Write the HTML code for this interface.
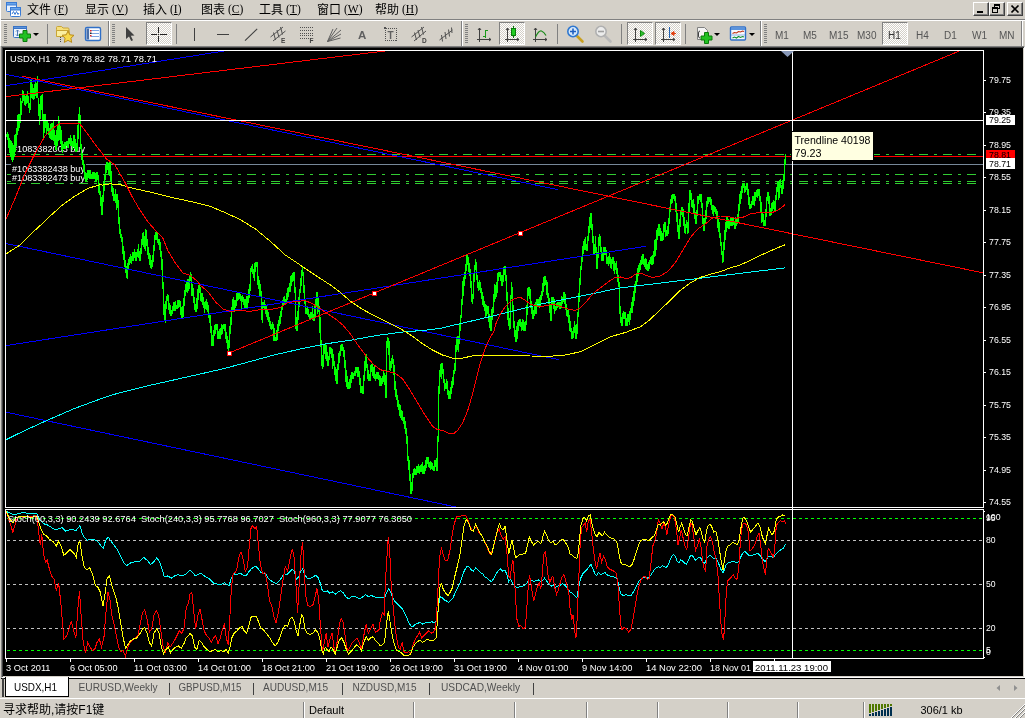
<!DOCTYPE html>
<html lang="zh">
<head>
<meta charset="utf-8">
<title>USDX,H1</title>
<style>
html,body{margin:0;padding:0;}
body{width:1025px;height:718px;overflow:hidden;background:#d4d0c8;position:relative;
 font-family:"Liberation Sans","Noto Sans CJK SC",sans-serif;font-size:11px;color:#000;}
.abs{position:absolute;}
.mi,.tf,.st,svg{will-change:transform;}
#menubar{position:absolute;left:0;top:0;width:1025px;height:19px;background:#d4d0c8;}
.mi{position:absolute;top:2px;height:17px;line-height:17px;font-size:12px;white-space:nowrap;
 font-family:"Liberation Sans","Noto Sans CJK SC",sans-serif;color:#000;font-weight:400;}
.mi u{text-decoration:underline;}
.mi .k{font-family:"Liberation Serif","Noto Serif CJK SC",serif;font-size:11.5px;margin-left:3px;font-weight:400;position:relative;top:-1px;}
#tb{position:absolute;left:0;top:21px;width:1025px;height:25px;background:#d4d0c8;}
.grip{position:absolute;top:24px;width:3px;height:20px;
 background:repeating-linear-gradient(to bottom,#808080 0,#808080 1px,#d4d0c8 1px,#d4d0c8 2px);}
.sep{position:absolute;top:24px;width:1px;height:20px;background:#808080;}
.sep2{position:absolute;top:21px;width:1px;height:25px;background:#808080;border-right:1px solid #fff;}
.pressed{position:absolute;top:22px;height:23px;box-sizing:border-box;border:1px solid;border-color:#808080 #fff #fff #808080;
 background-color:#fff;background-image:linear-gradient(45deg,#d4d0c8 25%,transparent 25%,transparent 75%,#d4d0c8 75%),linear-gradient(45deg,#d4d0c8 25%,transparent 25%,transparent 75%,#d4d0c8 75%);
 background-size:2px 2px;background-position:0 0,1px 1px;}
.tf{position:absolute;top:30px;height:12px;line-height:12px;font-size:10px;color:#555;white-space:nowrap;}
.ico{position:absolute;overflow:visible;}
.wbtn{position:absolute;top:2px;width:16px;height:14px;box-sizing:border-box;background:#d4d0c8;
 border:1px solid;border-color:#fff #404040 #404040 #fff;box-shadow:inset -1px -1px 0 #808080;}
#chartwrap{position:absolute;left:1px;top:46px;width:1024px;height:632px;background:#000;
 box-sizing:border-box;border:1px solid;border-color:#808080 #fff #fff #808080;box-shadow:inset 1px 1px 0 #404040,inset -1px -1px 0 #d4d0c8;}
#chartsvg{position:absolute;left:0;top:0;}
#tabs{position:absolute;left:0;top:677px;width:1025px;height:21px;background:#d4d0c8;}
.tab{position:absolute;top:683px;height:13px;line-height:13px;font-size:11px;color:#444;white-space:nowrap;}
.tabsep{position:absolute;top:683px;width:1px;height:12px;background:#404040;}
#status{position:absolute;left:0;top:698px;width:1025px;height:20px;background:#d4d0c8;}
.st{position:absolute;top:703px;height:14px;line-height:14px;font-size:12px;white-space:nowrap;color:#000;font-weight:400;}
.stsep{position:absolute;top:702px;width:1px;height:16px;background:#808080;border-right:1px solid #fff;}
svg text{font-family:"Liberation Sans","Noto Sans CJK SC",sans-serif;}
</style>
</head>
<body>
<div id="menubar"></div>
<div class="abs" style="left:0;top:19px;width:1025px;height:1px;background:#808080"></div>
<div class="abs" style="left:0;top:20px;width:1025px;height:1px;background:#fff"></div>
<div class="abs" style="left:0;top:0;width:1px;height:46px;background:#fff"></div>
<!-- app icon -->
<svg class="ico" style="left:5px;top:1px" width="17" height="17" viewBox="0 0 17 17">
 <rect x="1.5" y="1.5" width="10" height="9" rx="1" fill="#e8f2ff" stroke="#3a7bd5"/>
 <rect x="1.5" y="1.5" width="10" height="2.5" fill="#6aa5ea" stroke="#3a7bd5"/>
 <rect x="5.5" y="6.5" width="10" height="9" rx="1" fill="#ffffff" stroke="#3a7bd5"/>
 <rect x="5.5" y="6.5" width="10" height="2.5" fill="#6aa5ea" stroke="#3a7bd5"/>
 <path d="M7 13 L8.5 10.5 L10 13.5 L11.5 10.5 L13 13.5 L14 12" fill="none" stroke="#3a7bd5" stroke-width="1"/>
</svg>
<div class="mi" style="left:27px">文件<span class="k">(<u>F</u>)</span></div>
<div class="mi" style="left:85px">显示<span class="k">(<u>V</u>)</span></div>
<div class="mi" style="left:143px">插入<span class="k">(<u>I</u>)</span></div>
<div class="mi" style="left:201px">图表<span class="k">(<u>C</u>)</span></div>
<div class="mi" style="left:259px">工具<span class="k">(<u>T</u>)</span></div>
<div class="mi" style="left:317px">窗口<span class="k">(<u>W</u>)</span></div>
<div class="mi" style="left:375px">帮助<span class="k">(<u>H</u>)</span></div>
<!-- window buttons -->
<div class="wbtn" style="left:973px"><div class="abs" style="left:3px;top:8px;width:6px;height:2px;background:#000"></div></div>
<div class="wbtn" style="left:989px">
 <div class="abs" style="left:4px;top:1px;width:6px;height:5px;box-sizing:border-box;border:1px solid #000;border-top-width:2px"></div>
 <div class="abs" style="left:2px;top:4px;width:6px;height:6px;box-sizing:border-box;border:1px solid #000;border-top-width:2px;background:#d4d0c8"></div>
</div>
<div class="wbtn" style="left:1007px">
 <svg class="abs" style="left:3px;top:2px" width="9" height="8" viewBox="0 0 9 8"><path d="M0.5 0.5 L7.5 7.5 M7.5 0.5 L0.5 7.5" stroke="#000" stroke-width="1.6" fill="none"/></svg>
</div>
<!-- toolbar -->
<div class="grip" style="left:4px"></div>
<div class="sep" style="left:47px"></div>
<div class="sep2" style="left:108px"></div>
<div class="grip" style="left:112px"></div>
<div class="pressed" style="left:146px;width:26px"></div>
<div class="sep" style="left:176px"></div>
<div class="sep2" style="left:461px"></div>
<div class="grip" style="left:465px"></div>
<div class="pressed" style="left:499px;width:26px"></div>
<div class="sep" style="left:557px"></div>
<div class="sep" style="left:621px"></div>
<div class="pressed" style="left:627px;width:26px"></div>
<div class="pressed" style="left:655px;width:26px"></div>
<div class="sep" style="left:685px"></div>
<div class="sep2" style="left:760px"></div>
<div class="grip" style="left:764px"></div>
<div class="pressed" style="left:882px;width:26px"></div>
<div class="sep2" style="left:1021px"></div>
<div class="tf" style="left:775px">M1</div>
<div class="tf" style="left:803px">M5</div>
<div class="tf" style="left:829px">M15</div>
<div class="tf" style="left:857px">M30</div>
<div class="tf" style="left:888px;color:#333">H1</div>
<div class="tf" style="left:916px">H4</div>
<div class="tf" style="left:944px">D1</div>
<div class="tf" style="left:972px">W1</div>
<div class="tf" style="left:999px">MN</div>
<svg class="ico" style="left:0;top:21px" width="1025" height="25" viewBox="0 21 1025 25">
 <!-- new chart -->
 <g>
  <rect x="13.5" y="26.5" width="13" height="11" rx="1" fill="#eef4fc" stroke="#3a74c4"/>
  <rect x="13.5" y="26.5" width="13" height="2" fill="#5b93dc" stroke="#3a74c4"/>
  <path d="M17.5 30 V36 M16 31.5 L17.5 30 L19 31.5 M16 34.5 L17.5 36 L19 34.5" stroke="#4b78b8" fill="none" stroke-width="1"/>
  <path d="M23 30.5 h4 v3.5 h3.5 v4 h-3.5 v3.5 h-4 v-3.5 h-3.5 v-4 h3.5 z" fill="#22c022" stroke="#0a7a0a" stroke-width="1"/>
  <path d="M33 33 h6 l-3 3 z" fill="#000"/>
 </g>
 <!-- folder star -->
 <g>
  <path d="M56.5 29.5 v-2 q0 -1 1 -1 h4 l1.5 1.5 h5 q1 0 1 1 v7 h-12.5 z" fill="#f6df7c" stroke="#c9a535"/>
  <path d="M56.5 30.5 h12.5 v6 h-12.5 z" fill="#fbeea0" stroke="#c9a535"/>
  <path d="M60.5 37 v5" stroke="#444" stroke-dasharray="1 1"/>
  <path d="M68 31 l1.8 3.8 l4.2 .5 l-3.1 2.9 l.8 4.2 l-3.7 -2.1 l-3.7 2.1 l.8 -4.2 l-3.1 -2.9 l4.2 -.5 z" fill="#f7d84a" stroke="#b98a1a" stroke-width="1"/>
 </g>
 <!-- list -->
 <g>
  <rect x="85.5" y="27.5" width="15" height="13" rx="1.5" fill="#fdfdff" stroke="#2f6fc7" stroke-width="1.4"/>
  <rect x="86.5" y="28.5" width="2.6" height="11" fill="#4a6fa8"/>
  <path d="M91 30.5 h8 M91 33.5 h8 M91 36.5 h8" stroke="#7aa4e0" stroke-width="1"/>
  <rect x="90" y="30" width="1.5" height="1.5" fill="#e02020"/><rect x="90" y="32.5" width="1.5" height="1.5" fill="#222"/><rect x="90" y="35" width="1.5" height="1.5" fill="#e02020"/>
 </g>
 <!-- cursor arrow -->
 <path d="M126 27 L126 39 L129 36.5 L131.2 41 L133 40.2 L130.8 35.8 L134.5 35.5 Z" fill="#404040"/>
 <!-- crosshair -->
 <path d="M150.5 34.5 H157 M160 34.5 H166.5 M158.5 27 V33 M158.5 36 V42" stroke="#222" stroke-width="1" shape-rendering="crispEdges" fill="none"/>
 <rect x="158" y="34" width="1" height="1" fill="#222"/>
 <!-- v line, h line, diag -->
 <path d="M194.5 28 V41 M217 34.5 H229" stroke="#404040" stroke-width="1" shape-rendering="crispEdges"/>
 <path d="M245 40.7 L257.2 28.8" stroke="#404040" stroke-width="1.1"/>
 <!-- E channel -->
 <g stroke="#505050" stroke-width="1" fill="none">
  <path d="M270.5 37 L283 27 M273 41 L285.5 31"/>
  <path d="M273.5 32.5 L275.5 40 M277 30 L279 37.5 M280.5 27 L282.5 34.5" />
 </g>
 <text x="281" y="43" font-size="6.5" font-weight="bold" fill="#404040">E</text>
 <!-- F fibo -->
 <g stroke="#505050" stroke-width="1" stroke-dasharray="1 1" shape-rendering="crispEdges">
  <path d="M300 27.5 H313 M300 30.5 H313 M300 33.5 H313 M300 35.5 H313 M300 38.5 H309"/>
 </g>
 <text x="309.5" y="43" font-size="6.5" font-weight="bold" fill="#404040">F</text>
 <!-- fan -->
 <g stroke="#606060" stroke-width="1" fill="none">
  <path d="M327.5 41.5 L337 28 M327.5 41.5 L341 30 M327.5 41.5 L341 34 M327.5 41.5 L340.5 38 M327.5 41.5 L333 29"/>
 </g>
 <text x="358" y="39" font-size="11.5" font-weight="bold" fill="#606060">A</text>
 <!-- T box -->
 <rect x="385.5" y="28.5" width="11" height="12" fill="none" stroke="#505050" stroke-dasharray="1 1" shape-rendering="crispEdges"/>
 <rect x="384" y="27" width="2" height="2" fill="#505050"/>
 <text x="387.5" y="38.5" font-size="10" font-weight="bold" fill="#606060">T</text>
 <!-- D -->
 <g stroke="#505050" stroke-width="1" fill="none">
  <path d="M411.5 37 L424 27 M414 41 L426 31"/>
  <path d="M414.5 32.5 L416.5 40 M418 30 L420 37.5 M421.5 27 L423.5 34.5" />
 </g>
 <text x="422" y="43" font-size="6.5" font-weight="bold" fill="#404040">D</text>
 <!-- arrows icon -->
 <g stroke="#505050" stroke-width="1" fill="none">
  <path d="M439.5 40 L452.5 30"/>
  <path d="M441.5 35 L442.5 41.5 M445 32 L446 39 M448.5 29.5 L449.5 36.5 M451.5 27.5 L452 33"/>
 </g>
 <!-- bar chart icon -->
 <g stroke="#404040" stroke-width="1" fill="none" shape-rendering="crispEdges">
  <path d="M479.5 28 V42 M477 39.5 H491"/>
 </g>
 <path d="M478 30 L479.5 28 L481 30 M489 38 L491 39.5 L489 41" stroke="#404040" fill="none"/>
 <path d="M485.5 30 V37.5 M485.5 30.5 H488 M483 36.5 H485.5" stroke="#1a9a1a" stroke-width="1.4" fill="none" shape-rendering="crispEdges"/>
 <!-- candle icon -->
 <g stroke="#404040" stroke-width="1" fill="none" shape-rendering="crispEdges">
  <path d="M507.5 28 V42 M505 39.5 H519"/>
 </g>
 <path d="M506 30 L507.5 28 L509 30 M517 38 L519 39.5 L517 41" stroke="#404040" fill="none"/>
 <path d="M513.5 26 V38" stroke="#0a7a0a" shape-rendering="crispEdges"/>
 <rect x="511.5" y="28.5" width="4" height="7" fill="#22cc22" stroke="#0a7a0a"/>
 <!-- line chart icon -->
 <g stroke="#404040" stroke-width="1" fill="none" shape-rendering="crispEdges">
  <path d="M535.5 28 V42 M533 39.5 H547"/>
 </g>
 <path d="M534 30 L535.5 28 L537 30 M545 38 L547 39.5 L545 41" stroke="#404040" fill="none"/>
 <path d="M535.5 37 Q539 30 541.5 31 Q544 32 546 35.5" stroke="#1a8a1a" fill="none" stroke-width="1.2"/>
 <!-- zoom in -->
 <path d="M577 36 L582.5 41.5" stroke="#c9a020" stroke-width="2.6" stroke-linecap="round"/>
 <circle cx="573" cy="31.5" r="5.2" fill="#d6e8fb" stroke="#2f78d0" stroke-width="1.6"/>
 <path d="M570 31.5 H576 M573 28.5 V34.5" stroke="#1f5fc0" stroke-width="1.6"/>
 <!-- zoom out -->
 <path d="M605 36 L610.5 41.5" stroke="#b8b8b8" stroke-width="2.6" stroke-linecap="round"/>
 <circle cx="601" cy="31.5" r="5.2" fill="#ececec" stroke="#b0b0b0" stroke-width="1.6"/>
 <path d="M598 31.5 H604" stroke="#a0a0a0" stroke-width="1.6"/>
 <!-- shift icon -->
 <g stroke="#404040" stroke-width="1" fill="none" shape-rendering="crispEdges">
  <path d="M635.5 28 V42 M633 39.5 H647"/>
 </g>
 <path d="M634 30 L635.5 28 L637 30 M645 38 L647 39.5 L645 41" stroke="#404040" fill="none"/>
 <path d="M640.5 30.5 L644.5 33.5 L640.5 36.5 Z" fill="#30c030" stroke="#0a8a0a"/>
 <!-- autoscroll icon -->
 <g stroke="#404040" stroke-width="1" fill="none" shape-rendering="crispEdges">
  <path d="M663.5 28 V42 M661 39.5 H675"/>
 </g>
 <path d="M662 30 L663.5 28 L665 30 M673 38 L675 39.5 L673 41" stroke="#404040" fill="none"/>
 <path d="M669.5 27 V38" stroke="#2060b0" stroke-width="1" shape-rendering="crispEdges"/>
 <path d="M671 33.5 L674 31.5 V35.5 Z M671 33.5 H676" fill="#e04010" stroke="#e04010" stroke-width="1"/>
 <!-- indicators -->
 <path d="M697.5 27.5 h7 l3 3 v9 h-10 z" fill="#f4f4f4" stroke="#808080"/>
 <path d="M700 31 q-1.5 0 -1.5 2 v3 q0 2 1.5 2" fill="none" stroke="#404040"/>
 <path d="M704.500 32.5 h4 v3.500 h3.500 v4 h-3.500 v3.500 h-4 v-3.500 h-3.500 v-4 h3.500 z" fill="#22c022" stroke="#0a7a0a" stroke-width="1"/>
 <path d="M714 33 h6 l-3 3 z" fill="#000"/>
 <!-- template -->
 <rect x="730.5" y="27" width="15" height="13" rx="1" fill="#f6f9ff" stroke="#2f6fc7" stroke-width="1.4"/>
 <rect x="731" y="27.5" width="14" height="2.5" fill="#5b93dc"/>
 <path d="M732.5 33.5 l2 -1 l2 .5 l2 -1.500 l2 .5 l2 -1 l1.5 .5" stroke="#c03010" fill="none" stroke-width="1.1"/>
 <path d="M732.5 38 l2 -1 l2 1 l2 -1.500 l2 1 l2 -1 l1.5 .5" stroke="#109030" fill="none" stroke-width="1.1"/>
 <path d="M731 35 h14" stroke="#7aa4e0" stroke-width=".8"/>
 <path d="M749 33 h6 l-3 3 z" fill="#000"/>
</svg>
<div id="chartwrap"></div>
<svg id="chartsvg" width="1025" height="632" viewBox="0 46 1025 632" style="top:46px">
<g shape-rendering="crispEdges" fill="none" stroke="#fff" stroke-width="1">
<rect x="5.5" y="50.5" width="978" height="457"/>
<rect x="5.5" y="509.5" width="978" height="149"/>
</g>
<defs><clipPath id="cm"><rect x="6" y="51" width="977" height="456"/></clipPath><clipPath id="cs"><rect x="6" y="510" width="977" height="148"/></clipPath></defs>
<g clip-path="url(#cm)" shape-rendering="crispEdges" fill="none" stroke-width="1">
<path d="M7 154.5 H977" stroke="#32cd32" stroke-dasharray="9 6 3 6"/>
<path d="M7 174.5 H977" stroke="#32cd32" stroke-dasharray="9 6 3 6"/>
<path d="M7 181.5 H977" stroke="#32cd32" stroke-dasharray="9 6 3 6"/>
<path d="M7 183.5 H977" stroke="#32cd32" stroke-dasharray="9 6 3 6"/>
<path d="M6 156.5 H983" stroke="#ff0000"/>
<path d="M6 164.5 H983" stroke="#778899"/>
<rect x="11" y="163" width="75" height="19" fill="#000" stroke="none"/>
</g>
<g font-size="9.5" fill="#fff">
<text x="12" y="152" textLength="73" lengthAdjust="spacingAndGlyphs">#1083382003 buy</text>
<text x="12" y="172" textLength="73" lengthAdjust="spacingAndGlyphs">#1083382438 buy</text>
<text x="12" y="181" textLength="73" lengthAdjust="spacingAndGlyphs">#1083382473 buy</text>
</g>
<g clip-path="url(#cm)" shape-rendering="crispEdges" fill="none" stroke-width="1">
<path d="M6.5 134V137M7.5 132V140M8.5 134V148M9.5 138V153M10.5 140V157M11.5 141V160M12.5 143V162M13.5 145V160M14.5 135V157M15.5 134V152M16.5 128V146M17.5 115V135M18.5 114V131M19.5 114V128M20.5 98V123M21.5 101V115M22.5 90V103M23.5 91V101M24.5 95V105M25.5 96V106M26.5 95V104M27.5 91V103M28.5 96V108M29.5 103V113M30.5 79V110M31.5 80V98M32.5 84V99M33.5 88V100M34.5 84V99M35.5 81V96M36.5 83V98M37.5 76V98M38.5 98V116M39.5 104V125M40.5 96V119M41.5 95V110M42.5 94V120M43.5 114V138M44.5 114V133M45.5 114V128M46.5 121V135M47.5 121V131M48.5 123V135M49.5 128V138M50.5 124V139M51.5 123V140M52.5 123V140M53.5 121V141M54.5 130V145M55.5 135V150M56.5 130V150M57.5 126V146M58.5 116V141M59.5 121V140M60.5 126V144M61.5 130V150M62.5 141V153M63.5 144V149M64.5 142V149M65.5 142V149M66.5 141V146M67.5 141V148M68.5 138V148M69.5 138V144M70.5 135V146M71.5 138V146M72.5 141V150M73.5 135V147M74.5 135V149M75.5 139V152M76.5 143V152M77.5 125V151M78.5 114V139M79.5 107V123M80.5 115V149M81.5 144V160M82.5 153V165M83.5 160V172M84.5 164V179M85.5 172V182M86.5 173V182M87.5 170V180M88.5 170V178M89.5 170V179M90.5 170V179M91.5 174V179M92.5 172V179M93.5 172V179M94.5 172V179M95.5 173V182M96.5 172V182M97.5 172V180M98.5 175V193M99.5 183V195M100.5 191V206M101.5 197V215M102.5 195V215M103.5 182V202M104.5 175V191M105.5 165V180M106.5 162V173M107.5 162V170M108.5 163V174M109.5 162V176M110.5 162V181M111.5 171V192M112.5 186V196M113.5 188V201M114.5 194V201M115.5 189V203M116.5 194V210M117.5 194V208M118.5 200V224M119.5 217V234M120.5 229V238M121.5 234V242M122.5 237V254M123.5 246V260M124.5 251V267M125.5 260V273M126.5 266V278M127.5 263V279M128.5 259V270M129.5 257V265M130.5 254V263M131.5 256V264M132.5 252V261M133.5 252V261M134.5 249V258M135.5 252V261M136.5 252V261M137.5 249V257M138.5 244V258M139.5 251V261M140.5 248V261M141.5 239V254M142.5 233V245M143.5 232V247M144.5 236V249M145.5 229V251M146.5 230V246M147.5 239V255M148.5 247V259M149.5 253V265M150.5 255V268M151.5 260V269M152.5 255V267M153.5 245V262M154.5 235V251M155.5 232V240M156.5 232V240M157.5 233V243M158.5 239V245M159.5 239V250M160.5 242V257M161.5 251V270M162.5 259V289M163.5 282V315M164.5 304V321M165.5 301V323M166.5 296V309M167.5 294V301M168.5 295V310M169.5 303V314M170.5 305V316M171.5 310V316M172.5 306V314M173.5 302V311M174.5 302V311M175.5 301V311M176.5 305V309M177.5 300V309M178.5 300V308M179.5 300V307M180.5 301V315M181.5 307V319M182.5 306V319M183.5 298V317M184.5 290V306M185.5 284V296M186.5 281V292M187.5 279V293M188.5 279V291M189.5 275V289M190.5 272V281M191.5 274V296M192.5 284V296M193.5 288V303M194.5 297V310M195.5 304V312M196.5 298V312M197.5 289V309M198.5 285V300M199.5 285V293M200.5 287V301M201.5 293V302M202.5 293V305M203.5 297V308M204.5 302V313M205.5 301V309M206.5 299V310M207.5 302V312M208.5 305V318M209.5 314V323M210.5 315V333M211.5 326V346M212.5 335V346M213.5 330V346M214.5 325V336M215.5 324V334M216.5 324V330M217.5 324V339M218.5 331V339M219.5 329V339M220.5 328V339M221.5 324V335M222.5 325V334M223.5 324V329M224.5 324V331M225.5 324V339M226.5 332V343M227.5 336V349M228.5 340V351M229.5 326V348M230.5 317V334M231.5 307V325M232.5 299V312M233.5 297V311M234.5 300V312M235.5 300V308M236.5 293V306M237.5 292V301M238.5 292V300M239.5 292V299M240.5 294V301M241.5 296V309M242.5 295V302M243.5 297V305M244.5 299V309M245.5 299V309M246.5 296V309M247.5 296V308M248.5 289V303M249.5 284V298M250.5 268V291M251.5 266V272M252.5 264V274M253.5 269V278M254.5 263V281M255.5 262V272M256.5 262V267M257.5 262V285M258.5 276V289M259.5 280V296M260.5 284V297M261.5 291V320M262.5 302V323M263.5 302V308M264.5 300V310M265.5 304V314M266.5 305V317M267.5 310V320M268.5 312V322M269.5 317V326M270.5 321V329M271.5 324V330M272.5 322V329M273.5 324V341M274.5 328V341M275.5 337V341M276.5 330V341M277.5 324V340M278.5 320V331M279.5 316V326M280.5 311V324M281.5 306V317M282.5 300V310M283.5 297V305M284.5 296V305M285.5 299V304M286.5 293V304M287.5 288V300M288.5 287V297M289.5 283V292M290.5 276V292M291.5 275V286M292.5 273V282M293.5 272V281M294.5 272V293M295.5 287V329M296.5 317V331M297.5 311V331M298.5 297V320M299.5 289V307M300.5 278V293M301.5 270V286M302.5 267V276M303.5 272V293M304.5 285V304M305.5 299V314M306.5 308V314M307.5 307V315M308.5 309V317M309.5 314V319M310.5 312V320M311.5 312V318M312.5 306V320M313.5 314V321M314.5 306V321M315.5 299V317M316.5 292V306M317.5 292V314M318.5 297V312M319.5 306V333M320.5 317V347M321.5 340V366M322.5 355V369M323.5 344V367M324.5 344V354M325.5 344V359M326.5 345V361M327.5 352V366M328.5 356V366M329.5 347V360M330.5 347V354M331.5 348V358M332.5 349V369M333.5 354V366M334.5 361V375M335.5 367V381M336.5 369V384M337.5 364V384M338.5 353V370M339.5 351V363M340.5 345V356M341.5 344V351M342.5 344V351M343.5 347V357M344.5 350V368M345.5 360V382M346.5 370V387M347.5 376V389M348.5 382V389M349.5 379V389M350.5 375V388M351.5 372V383M352.5 372V379M353.5 373V379M354.5 371V376M355.5 367V376M356.5 367V373M357.5 367V377M358.5 367V377M359.5 371V385M360.5 378V393M361.5 386V393M362.5 386V394M363.5 375V394M364.5 361V381M365.5 354V371M366.5 354V368M367.5 364V379M368.5 370V381M369.5 374V381M370.5 365V381M371.5 364V372M372.5 364V376M373.5 367V378M374.5 366V379M375.5 374V381M376.5 372V379M377.5 372V379M378.5 372V380M379.5 375V386M380.5 376V386M381.5 378V386M382.5 376V384M383.5 371V382M384.5 373V385M385.5 375V398M386.5 341V398M387.5 337V348M388.5 338V355M389.5 341V370M390.5 361V371M391.5 358V368M392.5 355V364M393.5 359V375M394.5 365V390M395.5 381V397M396.5 389V400M397.5 395V407M398.5 400V410M399.5 404V416M400.5 405V418M401.5 410V420M402.5 411V421M403.5 417V424M404.5 417V429M405.5 421V434M406.5 428V444M407.5 436V461M408.5 456V470M409.5 460V481M410.5 474V494M411.5 482V494M412.5 473V491M413.5 469V478M414.5 468V475M415.5 469V475M416.5 466V475M417.5 466V473M418.5 464V473M419.5 466V474M420.5 465V472M421.5 464V472M422.5 462V474M423.5 466V474M424.5 465V474M425.5 460V471M426.5 457V468M427.5 457V464M428.5 457V467M429.5 462V468M430.5 461V470M431.5 462V469M432.5 463V470M433.5 466V471M434.5 460V471M435.5 460V467M436.5 458V471M437.5 436V471M438.5 386V442M439.5 370V394M440.5 364V377M441.5 363V379M442.5 363V374M443.5 369V383M444.5 379V391M445.5 383V389M446.5 379V389M447.5 381V395M448.5 390V399M449.5 391V399M450.5 387V399M451.5 381V394M452.5 377V388M453.5 370V385M454.5 363V374M455.5 345V371M456.5 337V352M457.5 336V350M458.5 336V352M459.5 323V344M460.5 315V331M461.5 299V318M462.5 281V305M463.5 277V296M464.5 272V286M465.5 264V279M466.5 254V271M467.5 254V265M468.5 257V272M469.5 263V276M470.5 269V288M471.5 281V302M472.5 294V304M473.5 274V299M474.5 265V282M475.5 259V270M476.5 262V280M477.5 275V288M478.5 282V291M479.5 280V290M480.5 282V293M481.5 288V299M482.5 292V305M483.5 296V307M484.5 301V311M485.5 304V317M486.5 305V316M487.5 306V314M488.5 306V322M489.5 314V328M490.5 316V331M491.5 309V331M492.5 307V320M493.5 294V313M494.5 284V302M495.5 285V299M496.5 282V297M497.5 273V293M498.5 272V281M499.5 272V277M500.5 272V281M501.5 275V286M502.5 275V286M503.5 267V282M504.5 266V275M505.5 266V281M506.5 275V301M507.5 292V320M508.5 308V326M509.5 318V330M510.5 295V329M511.5 282V299M512.5 287V311M513.5 305V328M514.5 321V337M515.5 330V342M516.5 326V342M517.5 322V339M518.5 320V331M519.5 319V326M520.5 319V327M521.5 322V331M522.5 319V330M523.5 320V331M524.5 322V331M525.5 321V331M526.5 305V325M527.5 288V315M528.5 287V296M529.5 287V299M530.5 289V308M531.5 301V314M532.5 307V319M533.5 310V319M534.5 304V316M535.5 302V314M536.5 299V314M537.5 299V306M538.5 299V307M539.5 297V308M540.5 295V306M541.5 291V300M542.5 283V296M543.5 277V292M544.5 276V286M545.5 276V285M546.5 280V295M547.5 282V298M548.5 293V304M549.5 298V313M550.5 305V321M551.5 297V321M552.5 297V305M553.5 297V309M554.5 299V314M555.5 306V311M556.5 303V310M557.5 302V308M558.5 302V307M559.5 302V309M560.5 302V309M561.5 296V308M562.5 297V304M563.5 292V302M564.5 292V304M565.5 294V310M566.5 304V316M567.5 310V317M568.5 310V323M569.5 315V331M570.5 321V332M571.5 328V339M572.5 331V339M573.5 327V338M574.5 321V333M575.5 325V339M576.5 324V339M577.5 312V334M578.5 293V317M579.5 278V302M580.5 266V285M581.5 256V270M582.5 246V262M583.5 241V254M584.5 239V250M585.5 237V250M586.5 244V251M587.5 236V251M588.5 226V241M589.5 217V233M590.5 213V228M591.5 213V230M592.5 224V243M593.5 236V255M594.5 244V255M595.5 236V253M596.5 247V269M597.5 252V269M598.5 237V258M599.5 234V246M600.5 236V252M601.5 247V261M602.5 253V261M603.5 247V261M604.5 247V255M605.5 247V255M606.5 250V264M607.5 257V264M608.5 256V266M609.5 253V264M610.5 257V268M611.5 259V269M612.5 257V264M613.5 257V271M614.5 261V274M615.5 263V270M616.5 261V274M617.5 268V282M618.5 275V287M619.5 282V314M620.5 306V323M621.5 317V326M622.5 313V326M623.5 311V319M624.5 312V319M625.5 312V326M626.5 318V326M627.5 314V326M628.5 314V322M629.5 311V325M630.5 308V320M631.5 302V313M632.5 297V313M633.5 291V306M634.5 284V301M635.5 281V293M636.5 274V286M637.5 268V282M638.5 265V276M639.5 263V272M640.5 260V270M641.5 256V265M642.5 254V264M643.5 254V265M644.5 259V267M645.5 258V269M646.5 259V270M647.5 264V271M648.5 262V271M649.5 260V269M650.5 257V264M651.5 256V265M652.5 255V265M653.5 251V264M654.5 240V257M655.5 239V256M656.5 230V250M657.5 228V240M658.5 224V236M659.5 224V236M660.5 228V241M661.5 231V241M662.5 233V241M663.5 224V240M664.5 222V232M665.5 222V237M666.5 230V236M667.5 226V236M668.5 218V234M669.5 207V224M670.5 199V212M671.5 195V204M672.5 194V203M673.5 194V199M674.5 194V201M675.5 196V212M676.5 203V222M677.5 213V232M678.5 225V239M679.5 219V239M680.5 210V227M681.5 207V215M682.5 207V217M683.5 209V226M684.5 217V233M685.5 224V234M686.5 220V228M687.5 222V234M688.5 203V233M689.5 190V212M690.5 190V200M691.5 193V207M692.5 200V208M693.5 199V213M694.5 204V219M695.5 212V224M696.5 210V224M697.5 196V216M698.5 196V204M699.5 194V200M700.5 194V202M701.5 194V208M702.5 203V224M703.5 218V231M704.5 218V231M705.5 210V224M706.5 201V219M707.5 197V207M708.5 197V204M709.5 197V202M710.5 197V205M711.5 199V210M712.5 205V214M713.5 205V216M714.5 206V212M715.5 207V214M716.5 209V218M717.5 211V228M718.5 218V232M719.5 222V238M720.5 233V246M721.5 242V255M722.5 251V263M723.5 242V262M724.5 230V250M725.5 222V240M726.5 217V232M727.5 217V228M728.5 219V229M729.5 221V229M730.5 218V226M731.5 217V226M732.5 217V226M733.5 217V225M734.5 221V229M735.5 217V229M736.5 218V226M737.5 214V224M738.5 204V222M739.5 194V211M740.5 191V204M741.5 186V199M742.5 183V193M743.5 183V188M744.5 183V193M745.5 186V192M746.5 183V190M747.5 183V195M748.5 189V205M749.5 197V209M750.5 204V209M751.5 201V208M752.5 196V205M753.5 196V205M754.5 192V206M755.5 192V201M756.5 190V197M757.5 189V198M758.5 189V196M759.5 189V201M760.5 196V212M761.5 202V223M762.5 213V222M763.5 214V226M764.5 220V226M765.5 209V226M766.5 197V217M767.5 192V201M768.5 192V204M769.5 196V216M770.5 208V216M771.5 203V215M772.5 202V211M773.5 200V209M774.5 201V211M775.5 195V211M776.5 187V200M777.5 182V192M778.5 182V200M779.5 180V198M780.5 179V188M781.5 185V194M782.5 180V194M783.5 174V189M784.5 159V181M785.5 154V165" stroke="#00ff00"/>
<path d="M6 74.3 L558 189.7" stroke="#0000ff"/>
<path d="M6 85.7 L224 51" stroke="#0000ff"/>
<path d="M6 243.5 L558.5 359.6" stroke="#0000ff"/>
<path d="M6 345.6 L645.7 246.3" stroke="#0000ff"/>
<path d="M6 412.2 L456 507" stroke="#0000ff"/>
<path d="M6 96.6 L385 51" stroke="#ff0000"/>
<path d="M22.3 76.3 L983 272.8" stroke="#ff0000"/>
<path d="M229 353 L959.4 51" stroke="#ff0000"/>
<polyline points="6.3,439.6 25.1,430.3 50.2,419.0 75.2,408.2 100.3,399.0 117.9,393.2 150.5,385.2 200.6,373.9 225.1,368.3 250.2,361.5 275.2,354.7 300.3,349.0 325.4,343.9 350.5,340.2 375.5,335.7 400.6,332.2 425.7,330.2 440.0,328.4 490.2,316.6 540.3,304.1 590.5,294.1 620.0,288.0 702.7,277.9 785.0,267.9" stroke="#00ffff"/>
<polyline points="6.1,253.9 20.5,244.7 34.0,231.0 37.6,228.0 50.2,216.0 62.7,204.7 75.2,195.9 87.8,188.4 100.3,184.7 102.5,185.1 110.0,183.9 120.1,184.6 130.1,187.6 150.2,192.1 170.2,197.1 190.3,201.4 210.3,206.4 225.4,212.7 240.4,219.7 255.5,229.0 270.5,241.5 285.6,255.3 300.6,265.3 315.6,275.4 330.4,285.0 340.4,292.5 350.5,301.3 363.0,309.6 375.5,316.4 388.1,322.6 402.6,330.0 412.6,336.3 422.6,343.8 432.7,350.1 442.7,355.1 452.7,358.1 462.7,358.1 472.8,355.8 485.3,355.1 490.2,355.5 510.2,355.5 530.3,356.0 550.3,356.2 565.4,355.0 580.4,351.7 595.5,344.2 610.5,336.7 625.6,332.4 640.6,326.7 650.6,319.1 660.7,309.1 670.2,300.5 680.2,290.5 690.2,283.0 700.2,277.4 710.3,274.2 720.3,271.7 730.3,267.9 740.4,264.9 750.4,260.4 760.4,255.4 770.5,250.9 780.5,246.6 785.0,244.8" stroke="#ffff00"/>
<polyline points="6.3,218.5 15.0,198.5 25.1,173.4 35.1,153.3 45.1,135.8 52.7,128.2 60.2,123.2 75.2,123.2 79.2,123.2 85.3,130.7 95.3,144.5 106.3,158.8 115.0,165.0 125.1,182.6 132.6,197.6 140.1,210.2 147.6,221.5 155.2,230.2 162.7,237.8 167.7,250.3 175.2,262.8 182.7,272.9 190.3,275.4 197.8,281.6 200.0,285.0 207.5,291.3 215.0,301.3 222.6,308.8 230.1,311.3 240.1,310.6 250.2,311.3 260.2,309.6 270.2,309.6 280.2,307.6 287.8,302.6 297.8,301.3 305.3,300.6 312.8,303.8 320.4,308.8 327.9,313.9 335.4,318.9 342.9,325.1 350.5,333.9 358.0,345.2 365.5,355.2 373.0,364.0 380.5,369.8 388.1,371.5 387.5,371.4 395.0,373.1 402.6,378.9 410.1,390.2 417.6,402.7 425.1,415.3 432.7,426.5 437.7,429.8 442.7,430.3 449.0,433.3 454.0,433.3 457.7,430.3 462.7,422.8 467.8,410.2 471.5,397.7 475.3,382.7 479.0,367.6 482.8,355.1 486.6,345.0 490.3,337.5 494.8,330.0 495.2,325.4 500.2,314.1 505.2,306.6 510.2,301.6 515.2,298.3 520.2,297.3 525.3,300.3 530.3,304.1 535.3,305.8 540.3,306.6 547.8,305.3 554.1,304.1 560.4,306.6 567.9,309.1 575.4,310.4 580.4,307.9 585.4,302.8 590.5,296.6 595.5,291.6 600.5,287.8 605.5,284.0 610.5,280.3 615.5,277.3 620.5,277.0 625.6,278.3 630.6,277.8 635.0,274.2 640.1,272.9 645.1,274.9 652.6,277.4 660.1,275.9 667.6,271.7 675.2,262.9 682.7,250.4 690.2,237.8 697.7,229.0 705.3,224.0 712.8,217.8 720.3,216.0 727.8,216.5 735.3,218.3 742.9,217.3 750.4,214.0 757.9,212.7 765.4,212.7 773.0,212.2 778.0,210.2 783.0,206.5 785.0,204.7" stroke="#ff0000"/>
</g>
<rect x="227.5" y="351.5" width="4" height="4" fill="#fff" stroke="#ff0000" stroke-width="1" shape-rendering="crispEdges"/>
<rect x="372.5" y="291.5" width="4" height="4" fill="#fff" stroke="#ff0000" stroke-width="1" shape-rendering="crispEdges"/>
<rect x="518.5" y="231.5" width="4" height="4" fill="#fff" stroke="#ff0000" stroke-width="1" shape-rendering="crispEdges"/>
<g clip-path="url(#cs)" shape-rendering="crispEdges" fill="none" stroke-width="1">
<path d="M7 540.5 H983" stroke="#c0c0c0" stroke-dasharray="3 3"/>
<path d="M7 584.5 H983" stroke="#c0c0c0" stroke-dasharray="3 3"/>
<path d="M7 628.5 H983" stroke="#c0c0c0" stroke-dasharray="3 3"/>
<path d="M7 518.5 H983" stroke="#00ff00" stroke-dasharray="3 3"/>
<path d="M7 650.5 H983" stroke="#00ff00" stroke-dasharray="3 3"/>
<polyline points="6.4,511.5 13.8,514.9 23.0,512.6 32.2,513.8 36.8,513.3 39.1,518.4 41.4,521.8 44.8,524.1 48.3,525.3 51.7,527.6 55.2,529.9 58.6,528.7 62.1,527.6 65.5,531.0 69.0,529.9 72.4,529.4 75.9,531.0 78.2,527.6 80.0,525.7 81.8,532.2 84.6,537.9 87.4,540.2 90.8,539.1 94.3,539.5 97.7,541.4 101.1,546.0 103.4,548.3 105.3,541.4 108.0,536.8 110.8,540.9 113.8,544.8 117.2,549.4 120.7,556.3 124.1,563.2 126.9,565.5 129.9,563.2 133.3,562.1 136.8,561.6 140.2,560.9 143.7,557.5 147.1,560.2 150.6,564.4 153.6,562.1 156.8,557.9 159.8,562.1 162.1,569.0 164.4,577.0 167.8,575.9 171.3,578.2 174.7,575.9 178.2,574.7 181.6,575.9 185.1,574.7 188.5,571.3 190.0,570.1 192.8,572.4 195.1,575.9 197.8,574.7 200.1,573.1 202.9,574.7 205.6,577.0 208.4,578.2 211.1,580.5 213.9,583.2 216.7,583.9 219.4,584.6 222.2,583.9 224.5,582.8 226.8,584.6 229.1,585.5 231.4,578.2 233.7,573.6 236.0,574.7 238.3,574.0 240.6,573.1 243.3,575.4 246.1,575.9 248.9,571.7 251.6,568.5 253.9,567.1 256.2,566.7 258.5,569.0 260.8,572.4 263.1,574.0 265.4,573.6 268.2,578.2 270.9,580.5 273.7,582.8 276.9,583.2 279.7,580.5 282.0,577.0 284.3,573.6 286.6,574.7 289.3,572.4 292.1,569.0 294.4,571.3 296.2,579.3 298.5,577.0 300.8,571.3 302.6,569.0 304.5,574.7 307.2,578.2 310.0,578.6 312.8,577.0 315.5,575.4 317.8,577.0 320.1,582.8 322.4,590.8 325.2,592.0 327.5,590.8 329.8,593.1 332.5,592.0 335.3,594.3 338.0,592.0 340.8,590.8 343.6,593.1 346.3,597.7 349.1,598.4 351.8,596.6 354.6,596.1 357.4,597.7 360.1,598.9 362.9,596.6 365.6,594.7 368.4,596.6 371.1,595.4 373.9,596.6 376.7,597.7 379.4,597.7 380.0,597.7 382.8,597.7 385.1,596.6 386.9,592.0 388.7,588.5 390.6,592.0 392.4,596.6 394.7,601.1 397.0,603.4 399.3,605.7 401.6,608.0 403.9,611.5 406.2,616.1 408.5,621.8 410.8,626.0 413.1,626.4 415.4,624.1 417.7,623.7 420.0,621.8 422.3,624.1 424.6,623.0 426.9,622.3 429.2,623.0 431.5,621.8 433.8,622.3 436.1,621.8 437.5,614.9 438.9,603.4 440.2,596.6 442.1,597.7 444.4,600.0 446.7,601.1 448.5,602.3 450.8,600.0 453.1,597.7 455.4,592.0 457.7,587.4 460.0,582.8 462.3,575.9 464.6,570.1 466.9,566.7 469.2,567.1 471.5,570.1 473.3,571.3 475.6,567.8 477.9,570.1 480.2,572.4 482.5,573.6 484.8,577.0 487.1,578.2 489.4,580.5 491.7,581.6 494.0,578.2 496.3,573.6 498.6,570.1 500.5,569.0 502.8,571.3 505.1,570.1 506.9,574.7 508.7,581.6 510.6,579.3 512.4,582.8 514.7,586.2 517.0,587.4 519.3,586.9 522.1,586.2 524.8,585.5 527.1,582.8 529.4,578.2 531.7,580.5 534.0,581.6 536.3,580.5 538.6,580.0 540.9,581.6 542.8,580.5 544.6,578.2 546.4,580.5 548.7,583.9 551.0,586.2 553.3,585.1 555.6,587.4 557.9,586.2 560.2,585.1 562.5,583.9 564.8,585.1 567.1,587.4 569.4,590.8 570.0,592.0 572.3,593.1 574.6,595.4 576.9,597.7 578.7,587.4 580.6,578.2 582.9,573.6 585.2,571.3 587.5,569.0 589.8,565.5 591.1,564.4 593.0,569.0 594.8,573.6 596.7,575.9 598.5,572.4 600.8,574.7 603.1,573.6 604.9,572.4 606.8,574.7 609.1,575.9 611.4,576.3 613.7,577.0 616.0,577.7 617.8,580.5 619.2,588.5 621.0,594.3 623.3,595.4 626.1,594.7 628.9,596.1 631.1,595.4 633.4,592.0 635.7,587.4 638.0,582.8 640.3,579.3 642.6,577.7 644.9,577.0 647.2,578.2 649.5,577.0 651.8,573.6 654.1,570.1 656.4,567.8 658.7,566.7 660.6,567.8 662.4,565.5 664.3,566.7 666.1,567.8 667.9,565.5 669.8,560.9 671.6,556.3 673.4,554.7 675.3,556.3 677.1,560.9 679.0,563.2 680.8,559.8 682.6,560.9 684.5,563.2 686.3,564.4 688.2,560.9 690.0,556.3 691.8,555.2 693.7,557.5 695.5,560.2 697.4,558.6 699.2,557.0 701.0,558.6 702.9,562.1 704.7,563.2 706.6,558.6 708.4,556.3 710.2,555.2 712.1,557.0 713.9,558.6 715.7,557.5 717.6,560.9 719.4,565.5 721.3,570.1 723.1,573.1 724.5,569.0 726.3,564.4 728.6,562.5 730.9,562.1 733.2,561.6 735.5,562.1 737.8,562.5 739.7,559.8 741.5,555.2 743.3,552.4 745.2,551.7 747.0,553.3 748.9,555.2 750.7,555.6 752.5,555.2 754.4,554.7 756.2,554.0 758.0,553.3 759.9,555.2 761.7,558.6 763.6,560.2 765.4,561.6 767.2,558.6 768.6,556.3 771.7,557.0 773.6,557.5 775.9,554.0 778.2,551.7 780.5,550.1 782.8,548.7 784.6,546.0 785.5,543.7" stroke="#00ffff"/>
<polyline points="6.4,511.5 9.2,520.7 12.9,532.2 16.1,520.7 19.5,516.1 23.0,517.2 27.6,516.1 32.2,516.6 36.3,515.6 37.9,525.3 40.2,544.8 41.8,534.5 43.7,555.2 45.5,562.1 47.1,559.8 49.4,569.0 51.7,575.9 54.0,579.3 56.3,590.8 58.6,582.8 60.9,603.4 63.9,639.1 66.7,635.6 69.0,628.7 71.3,620.7 73.6,631.0 75.9,637.9 77.7,610.3 79.5,590.8 81.4,619.5 83.2,642.5 85.5,652.9 87.8,642.5 90.1,647.1 92.4,650.6 94.7,649.4 97.0,642.5 99.3,639.1 101.6,647.1 103.9,637.9 105.7,614.9 108.0,592.0 109.9,598.9 111.7,614.9 114.0,624.1 116.3,635.6 118.6,647.1 120.9,651.7 123.2,650.6 125.5,656.3 127.8,647.1 130.1,642.5 132.4,640.2 135.6,637.9 137.9,635.6 140.2,624.1 142.5,612.6 144.8,609.9 147.1,619.5 149.4,632.2 151.7,628.7 154.0,614.9 156.3,610.8 158.6,614.9 160.9,631.0 163.2,647.1 165.5,651.7 167.8,642.5 170.1,647.1 172.4,643.7 174.7,640.2 177.0,635.6 179.3,631.0 181.6,633.3 183.9,628.7 186.2,608.0 188.5,603.4 190.0,594.3 191.8,592.0 193.4,608.0 195.7,628.7 198.0,614.9 200.1,609.2 202.0,619.5 204.3,631.0 206.6,635.6 208.9,637.9 211.1,642.5 213.4,637.9 215.7,635.6 218.0,643.7 220.3,637.9 222.6,628.7 224.5,624.1 226.3,637.9 228.2,644.8 230.0,614.9 231.4,587.4 233.2,573.6 235.1,572.4 236.9,569.0 238.7,557.5 241.0,551.7 243.3,559.8 245.2,571.3 247.5,566.7 249.3,546.0 251.1,527.6 253.0,525.7 254.8,528.7 256.7,526.4 258.5,546.0 260.3,564.4 262.6,573.6 264.9,572.4 267.2,582.8 269.5,601.1 271.8,605.7 274.1,617.2 276.0,623.0 278.3,612.6 280.6,596.6 282.9,580.5 285.2,566.7 287.5,571.3 289.8,559.8 292.1,549.4 293.9,555.2 295.7,580.5 297.6,612.6 299.4,580.5 301.3,550.6 302.6,542.5 304.0,569.0 305.9,596.6 307.7,605.7 310.5,606.2 313.2,604.6 315.1,596.6 316.9,588.5 318.7,598.9 320.6,628.7 322.4,651.7 324.3,642.5 326.1,633.3 327.9,647.1 330.2,637.9 332.1,633.3 333.9,647.1 335.7,652.9 337.6,637.9 339.4,624.1 341.3,618.4 343.1,621.8 345.4,637.9 347.7,651.7 350.0,647.1 352.3,642.5 354.6,640.2 356.9,637.9 359.2,642.5 361.5,649.4 363.8,635.6 366.1,624.1 368.4,633.3 370.7,628.7 373.0,624.1 375.3,632.2 377.6,631.0 379.9,628.7 380.0,621.8 382.3,612.6 384.1,614.9 385.5,580.5 386.9,557.5 388.3,536.8 389.7,550.6 391.0,580.5 392.9,603.4 394.7,624.1 396.6,637.9 398.4,647.1 400.2,649.4 402.1,642.5 403.9,651.7 406.2,652.9 408.5,651.7 410.8,652.9 413.1,644.8 415.4,639.1 417.7,635.6 419.5,632.2 421.8,637.9 424.1,635.6 426.4,633.3 428.7,631.0 431.0,633.3 433.3,632.2 435.6,628.7 437.5,598.9 438.9,569.0 440.2,552.9 441.6,548.3 443.4,555.2 445.3,560.9 447.6,560.9 449.9,550.6 452.2,534.5 454.5,523.0 456.8,516.1 459.5,516.6 462.3,515.6 465.1,514.9 467.4,518.4 469.7,525.3 472.0,531.0 474.3,528.7 476.6,526.4 478.9,532.2 481.1,534.5 483.4,539.1 485.7,543.7 488.0,549.4 490.3,554.0 492.6,550.6 494.9,541.4 497.2,532.2 499.1,528.7 500.9,534.5 503.2,539.1 505.1,536.8 506.9,552.9 508.7,575.9 510.1,578.2 511.5,566.7 512.9,559.8 514.3,575.9 515.6,598.9 517.0,619.5 518.9,626.4 520.7,625.3 523.0,628.7 525.3,627.6 526.7,610.3 528.0,589.7 529.4,574.7 530.8,582.8 532.2,592.0 533.6,601.1 535.4,594.3 537.2,587.4 539.1,582.8 540.9,588.5 542.3,573.6 543.7,555.2 545.1,551.7 546.4,559.8 547.8,573.6 549.7,582.8 551.5,578.2 552.9,575.9 554.7,587.4 556.6,594.3 558.4,589.7 560.2,582.8 562.1,577.0 563.9,574.7 565.7,580.5 567.6,587.4 569.4,596.6 570.0,608.0 571.8,619.5 573.2,614.9 574.6,631.0 576.0,637.9 577.4,614.9 578.7,580.5 580.1,546.0 581.5,527.6 583.3,525.3 585.2,523.0 586.6,532.2 588.4,520.7 590.2,519.5 591.6,532.2 593.0,546.0 594.8,559.8 596.7,569.0 598.5,559.8 599.9,552.9 601.7,562.1 603.6,556.3 605.4,559.8 607.2,566.7 609.5,569.0 611.8,570.1 614.1,571.3 616.4,573.6 617.8,582.8 619.2,603.4 620.6,624.1 622.0,629.9 623.8,627.6 626.1,628.7 628.9,632.2 631.1,628.7 633.0,619.5 634.8,608.0 636.7,596.6 638.5,587.4 640.8,580.5 643.1,577.0 644.9,575.9 647.2,579.3 649.1,578.2 650.9,564.4 652.8,546.0 654.6,541.4 656.4,534.5 658.3,519.5 660.1,523.0 662.0,528.7 663.8,523.0 665.6,527.6 667.0,534.5 668.9,523.0 670.7,516.1 672.5,514.9 674.4,517.2 676.2,527.6 678.0,544.8 679.9,536.8 681.3,529.9 683.1,537.9 684.9,546.0 686.8,549.4 688.6,536.8 690.5,524.1 691.8,523.0 693.7,536.8 695.5,550.6 697.4,546.0 699.2,539.1 700.6,543.7 702.4,559.8 704.3,569.0 705.6,571.3 707.0,546.0 708.9,539.1 710.7,536.8 712.5,542.5 714.4,552.9 716.2,559.8 718.0,575.9 719.4,598.9 720.8,621.8 722.2,635.6 723.6,640.2 724.9,619.5 726.3,592.0 727.7,580.5 729.5,579.3 731.4,577.0 733.2,574.7 735.1,578.2 736.9,579.3 738.7,569.0 740.1,546.0 741.5,529.9 742.9,524.1 744.7,523.0 746.6,525.3 748.4,532.2 749.8,550.6 751.6,549.4 753.4,547.1 755.3,543.7 757.1,536.8 759.0,533.3 760.8,546.0 762.6,562.1 764.5,571.3 765.4,574.7 766.8,559.8 768.2,548.3 771.7,554.0 773.6,557.5 774.9,546.0 776.3,525.3 778.2,523.0 780.5,520.7 782.8,521.8 784.6,520.7 785.5,524.1" stroke="#ff0000"/>
<polyline points="6.4,511.5 9.2,518.4 12.9,523.0 16.1,517.2 23.0,516.6 32.2,517.2 36.8,516.1 39.1,523.0 41.4,529.9 43.7,534.5 46.0,535.6 49.4,539.1 52.9,541.4 56.3,546.0 58.6,541.4 60.9,546.0 63.9,555.2 66.7,552.9 70.1,549.4 73.6,552.9 76.3,557.5 78.2,543.7 80.0,541.4 81.8,555.2 84.1,566.7 86.9,570.1 89.7,567.8 92.4,573.6 95.2,585.1 97.9,587.4 100.2,592.0 103.0,605.7 105.3,592.0 107.1,578.2 109.4,575.9 111.7,585.1 114.0,592.0 116.3,598.9 118.6,610.3 120.9,624.1 123.2,637.9 125.5,648.3 127.8,644.8 130.1,641.4 133.3,639.1 136.8,637.9 140.2,633.3 142.5,628.7 144.8,627.6 147.1,633.3 149.4,642.5 151.7,646.0 154.0,633.3 156.8,628.7 159.1,633.3 161.4,647.1 163.7,654.0 166.0,649.4 168.3,647.1 170.6,652.9 172.9,649.4 175.6,647.1 178.4,646.0 181.1,648.3 183.9,643.7 186.2,637.9 188.5,635.6 190.0,633.3 192.3,635.6 194.6,647.1 196.9,649.4 199.2,640.2 201.5,642.5 204.3,647.1 207.0,649.4 209.8,651.7 212.5,650.6 215.3,649.4 218.0,651.7 220.8,650.6 223.6,651.7 225.9,649.4 228.2,652.9 230.0,647.1 231.8,637.9 234.1,633.3 236.9,631.0 239.7,627.6 242.0,626.4 244.3,631.0 246.6,633.3 248.9,625.3 251.1,617.2 253.4,616.1 256.2,616.1 258.5,621.8 260.8,627.6 263.6,629.9 266.3,633.3 269.1,636.8 271.8,641.4 275.1,646.0 277.8,642.5 280.6,635.6 282.9,628.7 285.2,625.3 287.5,626.4 289.8,619.5 292.1,617.2 294.4,621.8 296.2,631.0 298.0,635.6 299.9,624.1 301.7,614.9 303.1,617.2 304.9,628.7 307.2,633.3 310.0,634.5 312.8,633.3 315.5,629.9 317.8,632.2 319.7,637.9 321.5,649.4 323.3,654.0 325.2,647.1 327.0,649.4 328.9,651.7 331.1,647.1 333.0,649.4 335.3,654.0 337.1,647.1 339.4,640.2 341.7,637.9 344.0,642.5 346.3,649.4 348.6,654.0 350.9,651.7 353.7,648.3 356.4,644.8 359.2,647.1 361.5,650.6 363.8,642.5 366.1,636.8 368.4,640.2 370.7,637.9 373.0,636.8 375.3,640.2 377.6,642.5 379.9,644.8 380.0,646.0 382.3,644.8 384.6,642.5 386.4,624.1 388.3,611.5 389.7,619.5 391.5,631.0 393.3,640.2 395.2,647.1 397.0,650.6 399.3,651.7 401.6,652.9 403.9,655.2 406.2,655.9 408.5,655.2 410.8,654.0 413.1,647.1 415.4,643.7 417.7,641.4 420.0,640.2 422.3,642.5 424.6,641.4 426.9,639.1 429.2,640.2 431.5,640.7 433.8,640.2 436.1,637.9 437.5,619.5 438.9,598.9 440.2,585.1 441.6,583.9 443.4,589.7 445.7,593.1 448.0,595.4 450.3,592.0 452.6,587.4 454.9,575.9 457.2,566.7 459.5,557.5 461.8,541.4 464.1,525.3 466.4,519.5 468.7,523.0 471.0,529.9 473.3,531.0 475.6,524.1 477.9,528.7 480.2,533.3 482.5,536.8 484.8,542.5 487.1,546.0 489.4,551.7 491.7,554.0 493.6,546.0 495.9,536.8 498.2,527.6 499.5,524.1 501.4,528.7 503.2,529.9 505.1,526.4 506.9,539.1 508.7,554.0 510.6,546.0 512.0,540.2 513.8,549.4 515.6,557.5 517.9,556.3 520.2,554.0 523.0,554.0 525.7,552.9 527.6,544.8 529.4,536.8 531.3,541.4 533.6,544.8 536.3,542.5 538.6,541.4 540.9,543.7 542.8,536.8 544.6,531.0 546.4,534.5 548.3,540.2 550.6,542.5 552.9,541.4 555.2,544.8 557.5,543.7 559.8,541.4 562.1,539.1 563.9,540.2 566.2,543.7 568.5,548.3 570.0,554.0 572.3,555.2 574.6,557.5 576.9,558.6 578.3,552.9 579.7,536.8 581.0,525.3 582.9,518.4 584.7,517.2 586.6,520.7 588.4,516.1 590.2,514.9 591.6,521.8 593.4,529.9 595.3,534.5 597.1,536.8 599.0,532.2 600.8,534.5 602.6,535.6 604.5,532.2 606.3,534.5 608.6,536.8 610.9,537.9 613.2,538.6 615.5,540.2 617.4,543.7 618.7,552.9 620.6,562.1 622.4,564.4 624.7,564.4 627.0,565.5 629.8,566.7 632.1,564.4 634.4,558.6 636.7,550.6 639.0,543.7 641.3,540.2 643.6,539.1 645.9,539.5 648.2,540.9 650.5,539.1 652.8,536.8 654.6,535.6 656.4,529.9 658.3,524.1 660.1,525.3 662.0,523.0 663.8,521.8 665.6,525.3 667.5,523.0 669.3,517.2 671.1,514.3 673.0,514.9 674.8,516.6 676.7,523.0 678.5,532.2 680.3,526.4 681.7,523.0 683.6,528.7 685.4,534.5 687.2,535.6 689.1,526.4 690.9,519.5 692.3,521.8 694.1,528.7 696.0,534.5 697.8,531.0 699.7,527.6 701.0,531.0 702.9,539.1 704.7,542.5 706.6,529.9 708.4,525.3 710.2,524.1 712.1,527.6 713.9,532.2 715.7,531.0 717.6,537.9 719.4,549.4 721.3,562.1 723.1,570.1 724.5,559.8 726.3,549.4 728.2,546.0 730.5,544.8 732.8,542.5 735.1,543.7 737.4,544.8 739.2,539.1 740.6,529.9 742.0,521.8 743.3,517.2 745.2,518.4 747.0,521.8 748.9,527.6 750.7,532.2 752.5,529.9 754.4,527.6 756.2,525.3 758.0,523.0 759.9,526.4 761.7,534.5 763.6,540.2 765.4,543.7 767.2,534.5 768.6,528.7 771.7,534.5 773.6,533.3 774.9,527.6 776.3,519.5 778.2,517.2 780.5,516.1 782.8,514.9 784.6,516.1" stroke="#ffff00"/>
</g>
<g shape-rendering="crispEdges" stroke="#fff" stroke-width="1">
<path d="M6 120.5 H983 M792.5 51 V658"/>
</g>
<path d="M781 51 L794 51 L787.5 57 Z" fill="#8898b8"/>
<g shape-rendering="crispEdges" stroke="#fff" stroke-width="1">
<path d="M984 80.5 h2M984 112.5 h2M984 145.5 h2M984 177.5 h2M984 210.5 h2M984 242.5 h2M984 275.5 h2M984 307.5 h2M984 340.5 h2M984 372.5 h2M984 405.5 h2M984 437.5 h2M984 470.5 h2M984 502.5 h2"/>
</g>
<g font-size="9.5" fill="#fff">
<text x="989" y="83" textLength="22" lengthAdjust="spacingAndGlyphs">79.75</text>
<text x="989" y="115" textLength="22" lengthAdjust="spacingAndGlyphs">79.35</text>
<text x="989" y="148" textLength="22" lengthAdjust="spacingAndGlyphs">78.95</text>
<text x="989" y="180" textLength="22" lengthAdjust="spacingAndGlyphs">78.55</text>
<text x="989" y="213" textLength="22" lengthAdjust="spacingAndGlyphs">78.15</text>
<text x="989" y="245" textLength="22" lengthAdjust="spacingAndGlyphs">77.75</text>
<text x="989" y="278" textLength="22" lengthAdjust="spacingAndGlyphs">77.35</text>
<text x="989" y="310" textLength="22" lengthAdjust="spacingAndGlyphs">76.95</text>
<text x="989" y="343" textLength="22" lengthAdjust="spacingAndGlyphs">76.55</text>
<text x="989" y="375" textLength="22" lengthAdjust="spacingAndGlyphs">76.15</text>
<text x="989" y="408" textLength="22" lengthAdjust="spacingAndGlyphs">75.75</text>
<text x="989" y="440" textLength="22" lengthAdjust="spacingAndGlyphs">75.35</text>
<text x="989" y="473" textLength="22" lengthAdjust="spacingAndGlyphs">74.95</text>
<text x="989" y="505" textLength="22" lengthAdjust="spacingAndGlyphs">74.55</text>
</g>
<g shape-rendering="crispEdges">
<rect x="986" y="115" width="29" height="10" fill="#fff"/>
<rect x="986" y="150" width="29" height="8" fill="#ff0000"/>
<rect x="986" y="158" width="29" height="11" fill="#fff"/>
</g>
<g font-size="9.5" fill="#000">
<text x="989" y="123" textLength="22" lengthAdjust="spacingAndGlyphs">79.25</text>
<text x="989" y="158" textLength="22" lengthAdjust="spacingAndGlyphs">78.81</text>
<text x="989" y="167" textLength="22" lengthAdjust="spacingAndGlyphs">78.71</text>
</g>
<g font-size="9.5" fill="#fff">
<text x="986" y="520" textLength="14.6" lengthAdjust="spacingAndGlyphs">100</text>
<text x="986" y="521" textLength="9.6" lengthAdjust="spacingAndGlyphs">95</text>
<text x="986" y="543" textLength="9.6" lengthAdjust="spacingAndGlyphs">80</text>
<text x="986" y="587" textLength="9.6" lengthAdjust="spacingAndGlyphs">50</text>
<text x="986" y="631" textLength="9.6" lengthAdjust="spacingAndGlyphs">20</text>
<text x="986" y="653" textLength="4.8" lengthAdjust="spacingAndGlyphs">5</text>
<text x="986" y="655" textLength="4.8" lengthAdjust="spacingAndGlyphs">0</text>
</g>
<path d="M984 511.5 h1 M984 657.5 h1" stroke="#fff" shape-rendering="crispEdges"/>
<g font-size="9.5" fill="#fff">
<text x="10" y="62" textLength="147" lengthAdjust="spacingAndGlyphs" xml:space="preserve">USDX,H1  78.79 78.82 78.71 78.71</text>
<text x="8" y="522" textLength="404" lengthAdjust="spacingAndGlyphs" xml:space="preserve">Stoch(60,3,3) 90.2439 92.6764  Stoch(240,3,3) 95.7768 96.7027  Stoch(960,3,3) 77.9077 76.3050</text>
</g>
<g shape-rendering="crispEdges" stroke="#fff" stroke-width="1"><path d="
M6.5 659 v3M70.5 659 v3M134.5 659 v3M198.5 659 v3M262.5 659 v3M326.5 659 v3M390.5 659 v3M454.5 659 v3M518.5 659 v3M582.5 659 v3M646.5 659 v3M710.5 659 v3M774.5 659 v3
"/></g>
<g font-size="9.5" fill="#fff">
<text x="6" y="671" textLength="44.5" lengthAdjust="spacingAndGlyphs">3 Oct 2011</text>
<text x="70" y="671" textLength="47.5" lengthAdjust="spacingAndGlyphs">6 Oct 05:00</text>
<text x="134" y="671" textLength="53" lengthAdjust="spacingAndGlyphs">11 Oct 03:00</text>
<text x="198" y="671" textLength="53" lengthAdjust="spacingAndGlyphs">14 Oct 01:00</text>
<text x="262" y="671" textLength="53" lengthAdjust="spacingAndGlyphs">18 Oct 21:00</text>
<text x="326" y="671" textLength="53" lengthAdjust="spacingAndGlyphs">21 Oct 19:00</text>
<text x="390" y="671" textLength="53" lengthAdjust="spacingAndGlyphs">26 Oct 19:00</text>
<text x="454" y="671" textLength="53" lengthAdjust="spacingAndGlyphs">31 Oct 19:00</text>
<text x="518" y="671" textLength="50.5" lengthAdjust="spacingAndGlyphs">4 Nov 01:00</text>
<text x="582" y="671" textLength="50.5" lengthAdjust="spacingAndGlyphs">9 Nov 14:00</text>
<text x="646" y="671" textLength="56" lengthAdjust="spacingAndGlyphs">14 Nov 22:00</text>
<text x="710" y="671" textLength="41" lengthAdjust="spacingAndGlyphs">18 Nov 01</text>
</g>
<rect x="753" y="661" width="78" height="11" fill="#fff" shape-rendering="crispEdges"/>
<text x="755" y="671" font-size="9.500" fill="#000" textLength="73" lengthAdjust="spacingAndGlyphs">2011.11.23 19:00</text>
<rect x="791.5" y="131.500" width="82" height="29" fill="#ffffe1" stroke="#000" stroke-width="1" shape-rendering="crispEdges"/>
<g font-size="10.5" fill="#000"><text x="794.500" y="144" textLength="76" lengthAdjust="spacingAndGlyphs">Trendline 40198</text><text x="794.500" y="157" textLength="27" lengthAdjust="spacingAndGlyphs">79.23</text></g>
</svg>
<div class="abs" style="left:1px;top:678px;width:1024px;height:1px;background:#000"></div>
<div class="abs" style="left:0;top:698px;width:1025px;height:1px;background:#fff"></div>
<div class="abs" style="left:2px;top:678px;width:2px;height:19px;background:#404040"></div>
<div class="abs" style="left:5px;top:677px;width:64px;height:20px;box-sizing:border-box;background:#fff;border:1px solid #000;border-top:none"></div>
<div class="tabsep" style="left:169px"></div>
<div class="tabsep" style="left:253px"></div>
<div class="tabsep" style="left:342px"></div>
<div class="tabsep" style="left:429px"></div>
<div class="tabsep" style="left:533px"></div>
<div class="stsep" style="left:303px"></div>
<div class="stsep" style="left:413px"></div>
<div class="stsep" style="left:514px"></div>
<div class="stsep" style="left:586px"></div>
<div class="stsep" style="left:657px"></div>
<div class="stsep" style="left:727px"></div>
<div class="stsep" style="left:797px"></div>
<div class="stsep" style="left:863px"></div>
<div class="st" style="left:3px">寻求帮助,请按F1键</div>
<svg class="ico" style="left:0;top:677px" width="1025" height="41" viewBox="0 677 1025 41">
 <g font-size="10.5" fill="#000">
  <text x="14" y="691" textLength="43" lengthAdjust="spacingAndGlyphs">USDX,H1</text>
  <text x="309" y="714" font-size="11" textLength="35" lengthAdjust="spacingAndGlyphs">Default</text>
  <text x="920.500" y="714" font-size="11" textLength="42" lengthAdjust="spacingAndGlyphs">306/1 kb</text>
 </g>
 <g font-size="10.5" fill="#505050">
  <text x="78.500" y="691" textLength="79" lengthAdjust="spacingAndGlyphs">EURUSD,Weekly</text>
  <text x="178.500" y="691" textLength="63" lengthAdjust="spacingAndGlyphs">GBPUSD,M15</text>
  <text x="263" y="691" textLength="65" lengthAdjust="spacingAndGlyphs">AUDUSD,M15</text>
  <text x="352.500" y="691" textLength="64" lengthAdjust="spacingAndGlyphs">NZDUSD,M15</text>
  <text x="441" y="691" textLength="79" lengthAdjust="spacingAndGlyphs">USDCAD,Weekly</text>
 </g>
 <path d="M1000 685 v6 l-3.5 -3 z M1014 685 v6 l3.500 -3 z" fill="#909090"/>
 <g shape-rendering="crispEdges" stroke-width="2"><path d="M870 704V713M873 704V712M876 704V711M879 704V710M882 704V709M885 704V708M888 704V707M891 704V706" stroke="#507800"/><path d="M870 714V716M873 713V716M876 712V716M879 711V716M882 710V716M885 709V716M888 708V716M891 707V716" stroke="#003050"/></g>
 <g stroke-width="1">
  <path d="M1012 718 L1025 705 M1016 718 L1025 709 M1020 718 L1025 713" stroke="#808080"/>
  <path d="M1011 718 L1025 704 M1015 718 L1025 708 M1019 718 L1025 712" stroke="#fff"/>
 </g>
</svg>
</body>
</html>
